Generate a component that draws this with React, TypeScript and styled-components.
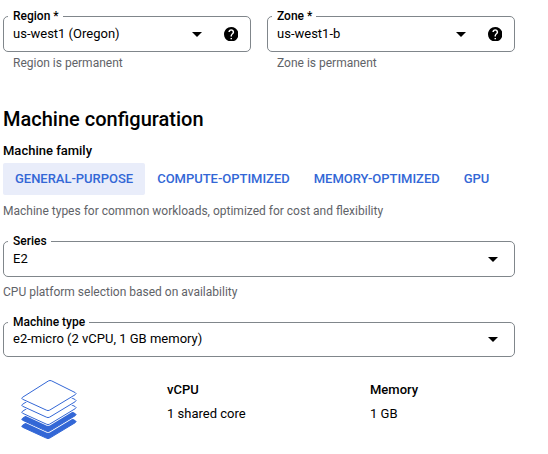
import React from "react";
import styled, { createGlobalStyle } from "styled-components";

const GlobalStyle = createGlobalStyle`
  * { box-sizing: border-box; }
  body {
    margin: 0;
    background: #fff;
    color: #000;
    font: 400 13px/20px Roboto, "Noto Sans", sans-serif;
    overflow: hidden;
  }
`;

const Page = styled.main`
  width: 515px;
  padding: 16px 0 0 3px;
`;

const FieldRow = styled.div`
  display: grid;
  grid-template-columns: 1fr 1fr;
  gap: 16px;
`;

const Box = styled.div<{ $height?: number }>`
  position: relative;
  display: flex;
  align-items: center;
  height: ${(p) => p.$height ?? 36}px;
  padding: 0 12px 0 9px;
  border: 1px solid #80868b;
  border-radius: 5px;
`;

const FloatingLabel = styled.label`
  position: absolute;
  top: -9px;
  left: 4px;
  padding: 0 4px 0 5px;
  background: #fff;
  font-size: 12px;
  line-height: 16px;
  font-weight: 500;
`;

const Value = styled.span`
  flex: 1;
  height: 20px;
  margin-bottom: 1px;
`;

const Arrow = styled.svg<{ $gap: number }>`
  width: 10px;
  height: 5px;
  margin-right: ${(p) => p.$gap}px;
`;

const HelpGlyph = styled.svg`
  width: 14.5px;
  height: 14.5px;
`;

const Hint = styled.p<{ $inset?: boolean; $top: number }>`
  margin: ${(p) => p.$top}px 0 0 ${(p) => (p.$inset ? 10 : 0)}px;
  color: #5f6368;
  font-size: 12px;
  line-height: 16px;
`;

const Title = styled.h2`
  margin: 36px 0 0;
  font-size: 20px;
  line-height: 24px;
  font-weight: 500;
`;

const Subtitle = styled.h3`
  margin: 10px 0 0;
  font-size: 13px;
  line-height: 20px;
  font-weight: 500;
`;

const Tabs = styled.div`
  display: flex;
  margin-top: 2px;
`;

const Tab = styled.button<{ $active?: boolean }>`
  height: 32px;
  padding: 0 12px;
  border: 0;
  border-radius: 2px;
  background: ${(p) => (p.$active ? "#e9edfa" : "transparent")};
  color: #3367d6;
  font: 500 13px/32px Roboto, sans-serif;
  letter-spacing: -0.02px;
  white-space: nowrap;
`;

const FieldBlock = styled.div<{ $top: number }>`
  margin-top: ${(p) => p.$top}px;
`;

const Summary = styled.div`
  display: grid;
  grid-template-columns: 164px 203px 1fr;
  margin-top: 23px;
`;

const Layers = styled.svg`
  width: 64px;
  height: 68px;
  margin: -4px 0 0 15px;
`;

const Term = styled.div`
  font-weight: 500;
`;

const Detail = styled.div`
  margin-top: 4px;
`;

type SelectProps = { label: string; value: string; help?: boolean; height?: number };

function Select({ label, value, help, height }: SelectProps) {
  return (
    <Box $height={height}>
      <FloatingLabel>{label}</FloatingLabel>
      <Value>{value}</Value>
      <Arrow $gap={help ? 21.5 : 4} viewBox="0 0 10 5">
        <path d="M0 0h10L5 5z" />
      </Arrow>
      {help && (
        <HelpGlyph viewBox="2 2 20 20">
          <path d="M12 2C6.48 2 2 6.48 2 12s4.48 10 10 10 10-4.48 10-10S17.52 2 12 2zm1 17h-2v-2h2v2zm2.07-7.75l-.9.92C13.45 12.9 13 13.5 13 15h-2v-.5c0-1.1.45-2.1 1.17-2.83l1.24-1.26c.37-.36.59-.86.59-1.41 0-1.1-.9-2-2-2s-2 .9-2 2H8c0-2.21 1.79-4 4-4s4 1.79 4 4c0 .88-.36 1.68-.93 2.25z" />
        </HelpGlyph>
      )}
    </Box>
  );
}

const sheet =
  "M4.5 21.3L30.3 5Q32 4 33.7 4.9L57.2 16.6Q59 17.5 57.2 18.7L31.7 34.1Q30 35.1 28.3 34.1L4.5 23.2Q3 22.3 4.5 21.3Z";

function LayersIcon() {
  return (
    <Layers viewBox="0 0 64 68">
      {[28, 21, 14, 7, 0].map((dy) => (
        <g key={dy} transform={`translate(0 ${dy})`}>
          <path d={sheet} fill="none" stroke="#fff" strokeWidth={2.4} />
          <path d={sheet} fill={dy > 20 ? "#3367d6" : "#fff"} stroke="#3367d6" />
        </g>
      ))}
    </Layers>
  );
}

export default function App() {
  return (
    <>
      <GlobalStyle />
      <Page>
        <FieldRow>
          <div>
            <Select label="Region *" value="us-west1 (Oregon)" help />
            <Hint $inset $top={3}>Region is permanent</Hint>
          </div>
          <div>
            <Select label="Zone *" value="us-west1-b" help />
            <Hint $inset $top={3}>Zone is permanent</Hint>
          </div>
        </FieldRow>
        <Title>Machine configuration</Title>
        <Subtitle>Machine family</Subtitle>
        <Tabs>
          <Tab $active>GENERAL-PURPOSE</Tab>
          <Tab>COMPUTE-OPTIMIZED</Tab>
          <Tab>MEMORY-OPTIMIZED</Tab>
          <Tab>GPU</Tab>
        </Tabs>
        <Hint $top={8}>Machine types for common workloads, optimized for cost and flexibility</Hint>
        <FieldBlock $top={22}>
          <Select label="Series" value="E2" />
          <Hint $top={7}>CPU platform selection based on availability</Hint>
        </FieldBlock>
        <FieldBlock $top={22}>
          <Select label="Machine type" value="e2-micro (2 vCPU, 1 GB memory)" height={35} />
        </FieldBlock>
        <Summary>
          <LayersIcon />
          <div>
            <Term>vCPU</Term>
            <Detail>1 shared core</Detail>
          </div>
          <div>
            <Term>Memory</Term>
            <Detail>1 GB</Detail>
          </div>
        </Summary>
      </Page>
    </>
  );
}
